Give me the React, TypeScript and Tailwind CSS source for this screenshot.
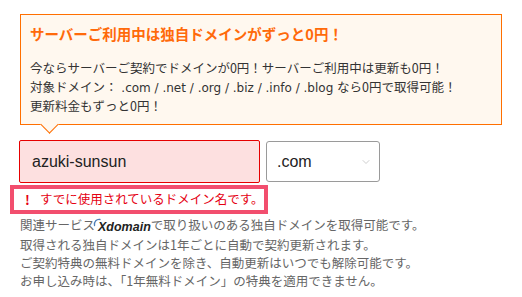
import { ChevronDown } from 'lucide-react'

const jp = "font-['Noto_Sans_CJK_JP','Noto_Sans',sans-serif]"

export default function App() {
  return (
    <div className={`w-[522px] h-[297px] bg-white overflow-hidden ${jp}`}>

      {/* ── campaign notice ── */}
      <div className="pt-[14px] pl-[20px]">
        <div className="relative w-[482px] border border-[#ff6f00] bg-[#fff8ef] pl-[9px] pt-[9px] pb-[9px]">
          <p className="text-[14.5px] leading-[20px] font-bold text-[#ff6a0a]">
            サーバーご利用中は独自ドメインがずっと0円！
          </p>
          <p className="mt-[14px] text-[12.5px] leading-[19px] text-[#333]">
            今ならサーバーご契約でドメインが0円！サーバーご利用中は更新も0円！<br />
            対象ドメイン：<span className="font-['DejaVu_Sans',sans-serif] text-[12px] leading-[8px]"> .com / .net / .org / .biz / .info / .blog </span>なら0円で取得可能！<br />
            更新料金もずっと0円！
          </p>
          <span className="absolute left-[22px] bottom-[-7px] w-[13px] h-[13px] rotate-45 bg-[#fff8ef] border-r border-b border-[#ff6f00]" />
        </div>
      </div>

      {/* ── domain input ── */}
      <div className="mt-[15px] ml-[19px] flex items-center gap-[6px]">
        <div className="w-[241px] h-[43px] flex items-center pl-[12px] bg-[#fde0e0] border border-[#e60000] rounded-[2px] font-['Liberation_Sans',Arial,sans-serif] text-[16px] text-[#222]">
          azuki-sunsun
        </div>
        <div className="w-[114px] h-[41px] flex items-center justify-between pl-[10px] pr-[7px] bg-white border border-[#9a9a9a] rounded-[3px] font-['Liberation_Sans',Arial,sans-serif] text-[16px] text-[#222]">
          .com
          <ChevronDown size={12} strokeWidth={1.5} className="text-[#bdbdbd]" />
        </div>
      </div>

      {/* ── error ── */}
      <div className="mt-[2px] ml-[10px] w-[258px] h-[29px] border-4 border-[#f24e6e] flex items-center pl-[11px] text-[12.5px] text-[#e50012]">
        <span className="font-bold w-[15px] text-[13px] leading-none">!</span>
        <span>すでに使用されているドメイン名です。</span>
      </div>

      {/* ── notes ── */}
      <div className="mt-[2px] ml-[20px] text-[12.5px] leading-[18px] text-[#666]">
        <p>
          関連サービス
          <span className="inline-flex items-end align-baseline">
            <svg width="8" height="12" viewBox="0 0 8 12" className="-ml-[2px] -mr-[3px] self-start">
              <path d="M7 1.5 C3.5 1 1 3.5 1.5 7.5" fill="none" stroke="#4f7fb8" strokeWidth="1.3" strokeLinecap="round" />
            </svg>
            <span className="font-['Liberation_Sans',Arial,sans-serif] font-bold italic text-[#222]">Xdomain</span>
          </span>
          で取り扱いのある独自ドメインを取得可能です。
        </p>
        <p>取得される独自ドメインは1年ごとに自動で契約更新されます。</p>
        <p>ご契約特典の無料ドメインを除き、自動更新はいつでも解除可能です。</p>
        <p>お申し込み時は、「1年無料ドメイン」の特典を適用できません。</p>
      </div>
    </div>
  )
}
